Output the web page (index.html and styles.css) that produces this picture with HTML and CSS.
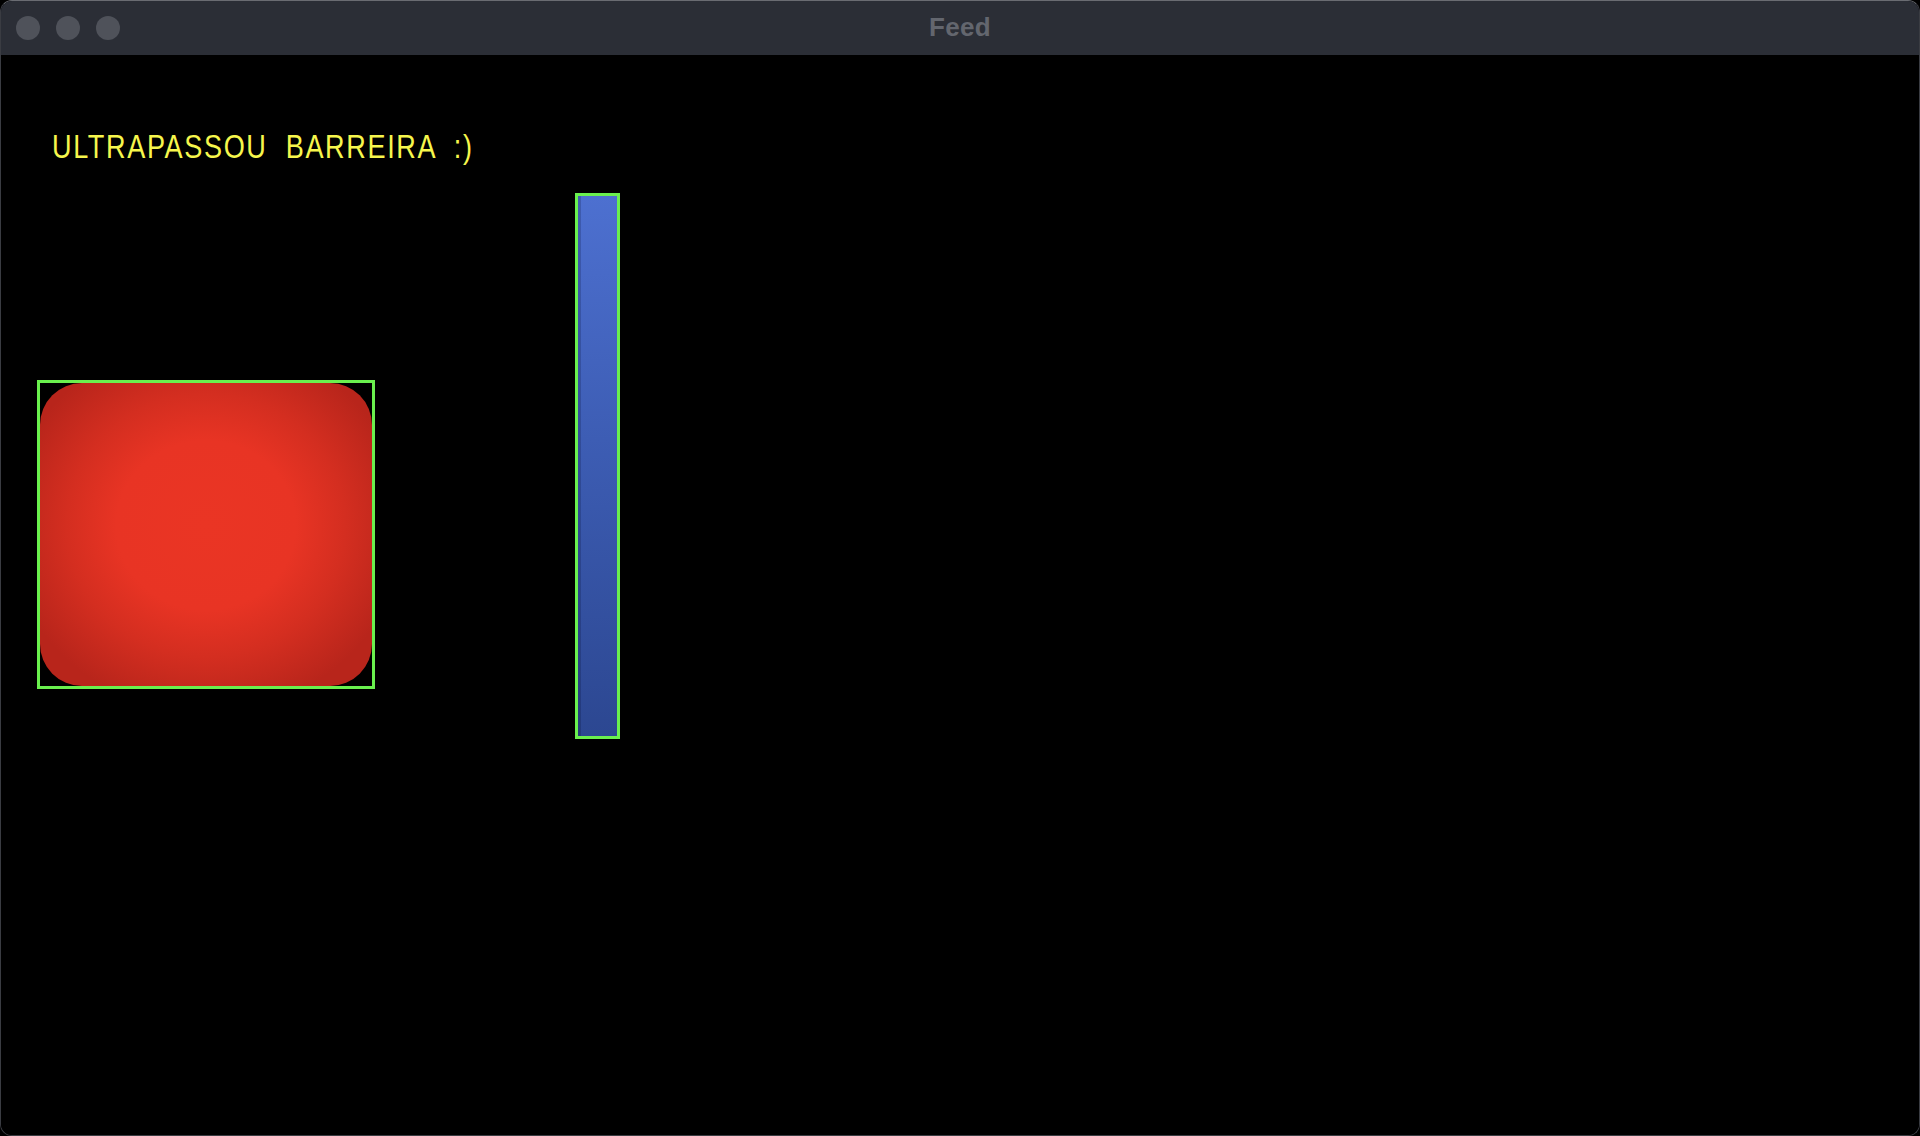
FILE: index.html
```html
<!DOCTYPE html>
<html>
<head>
<meta charset="utf-8">
<link rel="stylesheet" href="styles.css">
</head>
<body>
<div class="window">
  <div class="titlebar">
    <div class="lights">
      <span class="light"></span>
      <span class="light"></span>
      <span class="light"></span>
    </div>
    <div class="title">Feed</div>
    <div class="spacer"></div>
  </div>
  <div class="feed">
    <div class="label">ULTRAPASSOU BARREIRA :)</div>
    <div class="box face-box"><div class="face"></div></div>
    <div class="box bar-box"><div class="bar"></div></div>
  </div>
</div>
</body>
</html>
```
FILE: styles.css
```css
html, body {
  margin: 0;
  padding: 0;
  background: #000;
}
body {
  width: 1920px;
  height: 1136px;
  overflow: hidden;
  font-family: "Liberation Sans", Arial, sans-serif;
}
.window {
  box-sizing: border-box;
  width: 1920px;
  height: 1136px;
  border: 1px solid #3a3c42;
  border-top-color: #6a6c72;
  border-radius: 12px;
  overflow: hidden;
  background: #000;
  display: flex;
  flex-direction: column;
}
.titlebar {
  height: 54px;
  flex: 0 0 54px;
  background: #2b2e36;
  display: grid;
  grid-template-columns: 1fr auto 1fr;
  align-items: center;
}
.lights {
  display: flex;
  gap: 16px;
  padding-left: 15px;
  margin-top: -1px;
}
.light {
  width: 24px;
  height: 24px;
  border-radius: 50%;
  background: #4f525a;
}
.title {
  font-family: "Liberation Sans", Arial, sans-serif;
  font-weight: bold;
  font-size: 26px;
  color: #63666e;
  letter-spacing: 0.3px;
  margin-top: -1px;
}
.feed {
  position: relative;
  flex: 1;
  background: #000;
}
.label {
  position: absolute;
  left: 51px;
  top: 75px;
  font-family: "Liberation Sans", Arial, sans-serif;
  font-size: 33px;
  line-height: 33px;
  letter-spacing: 2px;
  word-spacing: 11px;
  color: #f6f64c;
  white-space: nowrap;
  transform: scaleX(0.82);
  transform-origin: 0 0;
}
.box {
  position: absolute;
  box-sizing: border-box;
  border: 3px solid #6af04e;
}
.face-box {
  left: 36px;
  top: 325px;
  width: 338px;
  height: 309px;
}
.face {
  width: 100%;
  height: 100%;
  border-radius: 42px;
  background: radial-gradient(ellipse 60% 62% at 50% 47%, #ea3524 0%, #e83424 45%, #d42e20 70%, #b8251b 100%);
}
.bar-box {
  left: 574px;
  top: 138px;
  width: 45px;
  height: 546px;
}
.bar {
  width: 100%;
  height: 100%;
  background: linear-gradient(180deg, #4d70d0 0%, #3d5db4 45%, #2c4791 100%);
  box-shadow: inset 3px 0 0 rgba(0, 0, 30, 0.18);
}
```
